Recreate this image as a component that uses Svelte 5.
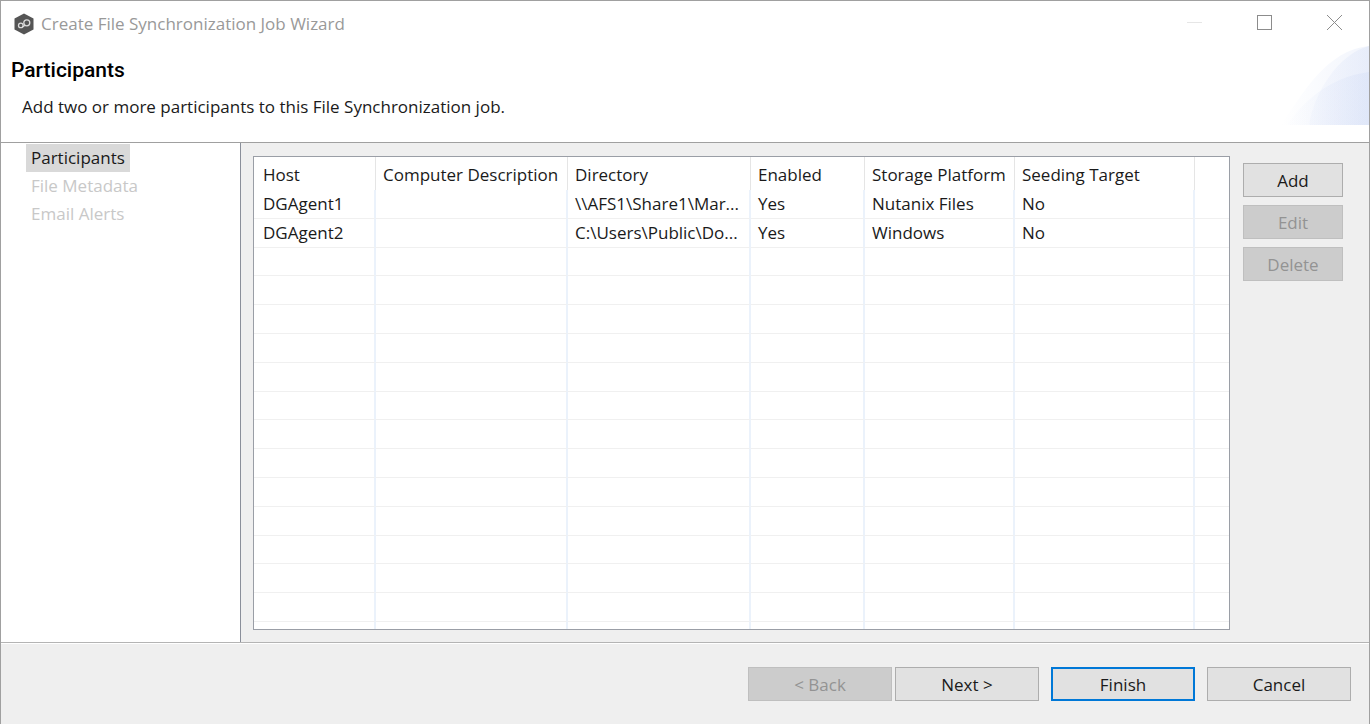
<script lang="ts">
  interface Participant {
    host: string;
    description: string;
    directory: string;
    enabled: string;
    platform: string;
    seeding: string;
  }

  const steps = [
    { label: "Participants", active: true },
    { label: "File Metadata", active: false },
    { label: "Email Alerts", active: false },
  ];

  const columns: { key: keyof Participant; label: string; width: number }[] = [
    { key: "host", label: "Host", width: 122 },
    { key: "description", label: "Computer Description", width: 192 },
    { key: "directory", label: "Directory", width: 183 },
    { key: "enabled", label: "Enabled", width: 114 },
    { key: "platform", label: "Storage Platform", width: 150 },
    { key: "seeding", label: "Seeding Target", width: 180 },
  ];

  const participants: Participant[] = [
    {
      host: "DGAgent1",
      description: "",
      directory: "\\\\AFS1\\Share1\\Mar...",
      enabled: "Yes",
      platform: "Nutanix Files",
      seeding: "No",
    },
    {
      host: "DGAgent2",
      description: "",
      directory: "C:\\Users\\Public\\Do...",
      enabled: "Yes",
      platform: "Windows",
      seeding: "No",
    },
  ];

  const emptyRows = Array.from({ length: 13 }, (_, i) => i);
</script>

<div class="window">
  <div class="titlebar">
    <svg class="app-icon" viewBox="0 0 20 22" aria-hidden="true">
      <path d="M10 0.5 L19.5 5.5 V16.5 L10 21.5 L0.5 16.5 V5.5 Z" fill="#555555" />
      <circle cx="6.8" cy="12.4" r="2.3" fill="none" stroke="#dcdcdc" stroke-width="1.3" />
      <circle cx="12.8" cy="9.8" r="3" fill="none" stroke="#dcdcdc" stroke-width="1.3" />
      <path d="M8.4 14 L11.2 12.3" stroke="#dcdcdc" stroke-width="1.3" />
    </svg>
    <span class="title">Create File Synchronization Job Wizard</span>
    <div class="controls">
      <button type="button" aria-label="Minimize" disabled>
        <svg viewBox="0 0 15 15"><path d="M0 7.5 H15" stroke="#e6e6e6" /></svg>
      </button>
      <button type="button" aria-label="Maximize">
        <svg viewBox="0 0 15 15"><rect x="0.5" y="0.5" width="14" height="14" fill="none" stroke="#8c8c8c" /></svg>
      </button>
      <button type="button" aria-label="Close">
        <svg viewBox="0 0 15 15"><path d="M0 0 L15 15 M15 0 L0 15" stroke="#8c8c8c" /></svg>
      </button>
    </div>
  </div>

  <header>
    <div class="intro">
      <h1>Participants</h1>
      <p>Add two or more participants to this File Synchronization job.</p>
    </div>
    <svg class="banner" viewBox="0 0 88 79" aria-hidden="true">
      <defs>
        <linearGradient id="fade" gradientUnits="userSpaceOnUse" x1="0" y1="0" x2="88" y2="0">
          <stop offset="0" stop-color="#c3d1f3" stop-opacity="0" />
          <stop offset="1" stop-color="#c3d1f3" stop-opacity="0.22" />
        </linearGradient>
      </defs>
      <path d="M0 79 C22 47 46 4 88 0 V79 Z" fill="url(#fade)" />
      <path d="M28 79 C32 50 56 8 88 0 V79 Z" fill="url(#fade)" />
      <path d="M6 79 C22 56 48 31 88 26 V79 Z" fill="url(#fade)" />
    </svg>
  </header>

  <div class="body">
    <nav>
      {#each steps as step}
        <a href="#{step.label.toLowerCase().replace(' ', '-')}" class:active={step.active}>{step.label}</a>
      {/each}
    </nav>

    <main>
      <div class="grid">
        <table>
          <colgroup>
            {#each columns as column}
              <col style="width: {column.width}px" />
            {/each}
            <col />
          </colgroup>
          <thead>
            <tr>
              {#each columns as column}
                <th scope="col">{column.label}</th>
              {/each}
              <td></td>
            </tr>
          </thead>
          <tbody>
            {#each participants as participant}
              <tr>
                {#each columns as column}
                  <td>{participant[column.key]}</td>
                {/each}
                <td></td>
              </tr>
            {/each}
            {#each emptyRows as row (row)}
              <tr class="empty">
                {#each columns as column}
                  <td>&nbsp;</td>
                {/each}
                <td></td>
              </tr>
            {/each}
            <tr class="rest">
              {#each columns as column}
                <td></td>
              {/each}
              <td></td>
            </tr>
          </tbody>
        </table>
      </div>

      <div class="actions">
        <button class="btn" type="button">Add</button>
        <button class="btn" type="button" disabled>Edit</button>
        <button class="btn" type="button" disabled>Delete</button>
      </div>
    </main>
  </div>

  <footer>
    <div class="pair">
      <button class="btn" type="button" disabled>&lt; Back</button>
      <button class="btn" type="button">Next &gt;</button>
    </div>
    <button class="btn primary" type="button">Finish</button>
    <button class="btn" type="button">Cancel</button>
  </footer>
</div>

<style>
  :global(body) {
    margin: 0;
  }

  .window {
    box-sizing: border-box;
    min-height: 100vh;
    display: flex;
    flex-direction: column;
    border: 1px solid #a0a0a0;
    border-bottom: 0;
    background: #ffffff;
    color: #1a1a1a;
    font-family: "Segoe UI", "Open Sans", sans-serif;
    font-size: 17px;
    line-height: 24px;
  }

  .titlebar {
    height: 45px;
    display: flex;
    align-items: center;
    padding-left: 13px;
    color: #999999;
  }

  .app-icon {
    width: 20px;
    height: 22px;
  }

  .title {
    margin-left: 7px;
  }

  .controls {
    display: flex;
    margin-left: auto;
    align-self: stretch;
  }

  .controls button {
    width: 70px;
    display: flex;
    align-items: center;
    justify-content: center;
    padding: 0 0 2px;
    border: 0;
    background: transparent;
  }

  .controls svg {
    width: 15px;
    height: 15px;
  }

  header {
    height: 96px;
    display: flex;
    justify-content: space-between;
    align-items: flex-start;
    border-bottom: 1px solid #a0a0a0;
  }

  .intro {
    padding: 12px 0 0 10px;
  }

  h1 {
    margin: 0;
    color: #000000;
    font-family: Roboto, sans-serif;
    font-size: 21px;
    font-weight: 500;
    line-height: 24px;
  }

  p {
    margin: 13px 0 0 11px;
  }

  .banner {
    width: 88px;
    height: 79px;
  }

  .body {
    flex: 1;
    display: flex;
  }

  nav {
    box-sizing: border-box;
    width: 240px;
    display: flex;
    flex-direction: column;
    align-items: flex-start;
    padding: 1px 0 0 25px;
    border-right: 1px solid #8a8f9a;
  }

  nav a {
    padding: 2px 5px;
    color: #c8c8c8;
    text-decoration: none;
  }

  nav a.active {
    background: #d9d9d9;
    color: #1a1a1a;
  }

  main {
    flex: 1;
    display: flex;
    gap: 13px;
    padding: 13px 26px 12px 12px;
    background: #efefef;
  }

  .grid {
    flex: 1;
    display: flex;
    border: 1px solid #9a9ea6;
    background: #ffffff;
  }

  table {
    width: 100%;
    table-layout: fixed;
    border-collapse: separate;
    border-spacing: 0;
  }

  th,
  td {
    padding: 0 0 0 7px;
    border-right: 2px solid #ebf2fb;
    border-bottom: 1px solid #f0f0f0;
    font-weight: 400;
    line-height: 24px;
    text-align: left;
    white-space: nowrap;
  }

  th,
  thead td {
    box-sizing: border-box;
    height: 33px;
    padding-top: 3px;
    border-right: 1px solid #e5e5e5;
    border-bottom: 0;
  }

  th:first-child,
  td:first-child {
    padding-left: 9px;
  }

  td:last-child {
    border-right: 0;
  }

  .rest td {
    height: 7px;
    border-bottom: 0;
  }

  .actions {
    display: flex;
    flex-direction: column;
    gap: 8px;
    padding-top: 7px;
  }

  .btn {
    box-sizing: border-box;
    width: 144px;
    height: 34px;
    padding: 2px 0 0;
    border: 1px solid #adadad;
    background: #e1e1e1;
    color: #1a1a1a;
    font: inherit;
  }

  .btn:disabled {
    border-color: #bfbfbf;
    background: #cccccc;
    color: #939393;
  }

  .btn.primary {
    border: 2px solid #0078d7;
  }

  .actions .btn {
    width: 100px;
  }

  footer {
    display: flex;
    justify-content: flex-end;
    gap: 12px;
    padding: 24px 18px 23px;
    border-top: 1px solid #b4b4b4;
    background: #efefef;
    box-shadow: inset 0 1px #ffffff;
  }

  .pair {
    display: flex;
    gap: 3px;
  }
</style>
